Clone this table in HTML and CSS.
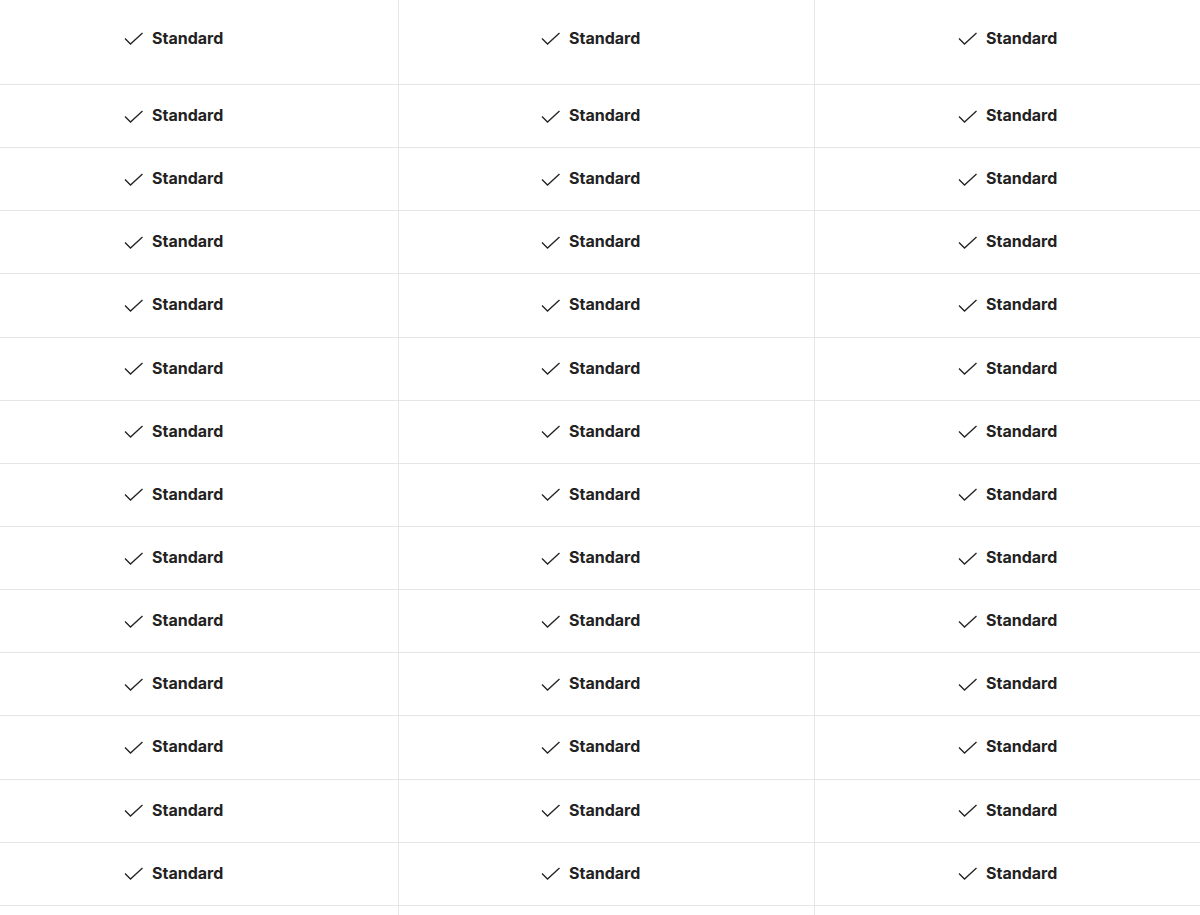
FILE: index.html
```html
<!DOCTYPE html>
<html lang="en">
<head>
<meta charset="utf-8">
<link rel="stylesheet" href="styles.css">
</head>
<body>
<div class="table" id="t"></div>
<script>
const t = document.getElementById('t');
const check = '<svg class="ico" width="20" height="14" viewBox="0 0 20 14"><path d="M1 6.5 L6.5 12 L18.5 1" fill="none" stroke="#222" stroke-width="1.3"/></svg>';
for (let r = 0; r < 15; r++) {
  const row = document.createElement('div');
  row.className = 'row' + (r === 0 ? ' first' : '');
  for (let c = 0; c < 3; c++) {
    const content = r < 14 ? check + '<span class="lbl">Standard</span>' : '';
    row.innerHTML += '<div class="cell c' + c + '">' + content + '</div>';
  }
  t.appendChild(row);
}
</script>
</body>
</html>
```

FILE: styles.css
```css
html, body {
  margin: 0;
  padding: 0;
  background: #fff;
  overflow: hidden;
}
.table {
  width: 1200px;
  font-family: Inter, "Liberation Sans", sans-serif;
  color: #222;
}
.row {
  display: grid;
  grid-template-columns: 399px 416px 1fr;
  height: 63.15px;
  box-sizing: border-box;
  border-bottom: 1px solid #e6e6e6;
}
.row.first {
  height: 85px;
}
.cell {
  display: flex;
  align-items: center;
  gap: 8px;
  padding-left: 142px;
  padding-bottom: 2px;
  border-right: 1px solid #e6e6e6;
}
.row.first .cell {
  padding-bottom: 9px;
}
.cell.c0 {
  padding-left: 124px;
}
.cell.c2 {
  border-right: none;
  padding-left: 143px;
}
.ico {
  display: block;
  flex: none;
  margin-top: 3px;
}
.lbl {
  font-size: 16px;
  font-weight: 700;
  letter-spacing: 0;
}
```
